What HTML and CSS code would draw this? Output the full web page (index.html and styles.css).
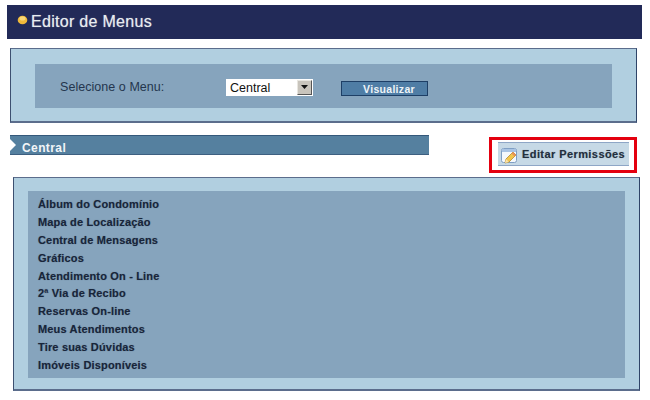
FILE: index.html
```html
<!DOCTYPE html>
<html lang="pt">
<head>
<meta charset="utf-8">
<title>Editor de Menus</title>
<link rel="stylesheet" href="styles.css">
</head>
<body>
<header class="title-bar">
  <svg class="bullet" width="11" height="10" viewBox="0 0 11 10"><ellipse cx="5.500" cy="5" rx="4.800" ry="4.300" fill="#f0b93a"/><ellipse cx="5.500" cy="3.600" rx="3" ry="2" fill="#f8d878"/></svg>
  <h1 class="title">Editor de Menus</h1>
</header>
<section class="panel panel-select">
  <div class="panel-inner select-row">
    <span class="select-label">Selecione o Menu:</span>
    <div class="fake-select">
      <span class="fake-value">Central</span>
      <span class="fake-arrow"><svg width="7" height="4" viewBox="0 0 7 4"><path d="M0 0h7L3.500 4z" fill="#111"/></svg></span>
    </div>
    <button class="view-btn" type="button">Visualizar</button>
  </div>
</section>
<div class="section-row">
  <div class="section-bar">
    <span class="section-notch"></span>
    <span class="section-name">Central</span>
  </div>
  <div class="highlight">
    <div class="perm-btn">
      <svg class="perm-icon" width="19" height="18" viewBox="0 0 19 18">
        <rect x="0.500" y="1.500" width="15" height="14" rx="2" fill="#f4f8fc" stroke="#7f9fc4"/>
        <rect x="1" y="2" width="14" height="3" fill="#a9c4e4"/>
        <path d="M4 16l1-4 7-7 3 3-7 7z" fill="#f3c64c" stroke="#b58a2c" stroke-width="0.800"/>
        <path d="M4 16l1-4 3 3z" fill="#f7e3b0"/>
        <path d="M10.500 6.500l3 3 1.500-1.500-3-3z" fill="#e8905a"/>
      </svg>
      <span class="perm-label">Editar Permissões</span>
    </div>
  </div>
</div>
<section class="panel panel-list">
  <ul class="panel-inner menu-list">
    <li>Álbum do Condomínio</li>
    <li>Mapa de Localização</li>
    <li>Central de Mensagens</li>
    <li>Gráficos</li>
    <li>Atendimento On - Line</li>
    <li>2ª Via de Recibo</li>
    <li>Reservas On-line</li>
    <li>Meus Atendimentos</li>
    <li>Tire suas Dúvidas</li>
    <li>Imóveis Disponíveis</li>
  </ul>
</section>
</body>
</html>
```
FILE: styles.css
```css
html, body {
  margin: 0;
  padding: 0;
  background: #fff;
  font-family: "Liberation Sans", Arial, sans-serif;
}
body {
  width: 650px;
  height: 400px;
  overflow: hidden;
  padding-top: 5px;
  box-sizing: border-box;
}
.title-bar {
  display: flex;
  align-items: center;
  width: 635px;
  height: 34px;
  margin-left: 7px;
  padding-left: 10px;
  box-sizing: border-box;
  background: #222a58;
}
.bullet {
  margin-top: -5px;
  margin-right: 3px;
}
.title {
  margin: -1px 0 0;
  font-size: 16px;
  font-weight: normal;
  color: #e8ecf0;
  letter-spacing: 0.3px;
  text-shadow: 0 0 1px rgba(232, 236, 240, 0.6);
}
.panel {
  box-sizing: border-box;
  background: #b1cfe0;
  border: 1px solid #2f4468;
  border-top-color: #5b6d8c;
  border-left-color: #3d5070;
  border-bottom-width: 2px;
  border-bottom-color: #5b6d8c;
}
.panel-inner {
  background: #86a4bd;
}
.panel-select {
  width: 627px;
  height: 75px;
  margin: 9px 0 0 10px;
  padding: 15px 24px 0;
}
.select-row {
  display: flex;
  align-items: center;
  height: 44px;
  padding-left: 25px;
}
.select-label {
  width: 166px;
  padding-top: 2px;
  font-size: 12.500px;
  color: #24364e;
  letter-spacing: 0.05px;
}
.fake-select {
  display: flex;
  align-items: center;
  justify-content: space-between;
  width: 87px;
  height: 17px;
  margin-top: 2px;
  padding: 0 1px 0 4px;
  box-sizing: border-box;
  background: #fff;
}
.fake-value {
  padding-top: 2px;
  font-size: 12.500px;
  color: #111;
}
.fake-arrow {
  display: flex;
  align-items: center;
  justify-content: center;
  width: 15px;
  height: 15px;
  box-sizing: border-box;
  background: #c8c4bc;
  border: 1px solid;
  border-color: #e8e6e0 #555 #555 #e8e6e0;
}
.view-btn {
  width: 87px;
  height: 15px;
  margin: 5px 0 0 28px;
  padding: 0 0 0 9px;
  box-sizing: border-box;
  background: #4f7da5;
  border: 1px solid #1e3f66;
  color: #eef4f8;
  font-family: inherit;
  font-size: 10.500px;
  font-weight: bold;
  line-height: 12px;
  letter-spacing: 0.3px;
}
.section-row {
  display: flex;
  align-items: flex-start;
  height: 54px;
  margin: 12px 0 0 10px;
}
.section-bar {
  position: relative;
  display: flex;
  align-items: center;
  width: 419px;
  height: 20px;
  padding: 5px 0 0 12px;
  box-sizing: border-box;
  background: #55809f;
  border-top: 1px solid #34587a;
  border-bottom: 1px solid #3d5f80;
}
.section-notch {
  position: absolute;
  left: 0;
  top: 3px;
  border-left: 6px solid #fff;
  border-top: 6px solid transparent;
  border-bottom: 6px solid transparent;
}
.section-name {
  font-size: 12px;
  font-weight: bold;
  color: #f2f6f8;
  letter-spacing: 0.4px;
}
.highlight {
  width: 148px;
  height: 36px;
  margin: 2px 0 0 60px;
  padding: 2px 5px 0 6px;
  box-sizing: border-box;
  border: 3px solid #e4000f;
  background: #fff;
}
.perm-btn {
  display: flex;
  align-items: center;
  width: 131px;
  height: 24px;
  padding-left: 3px;
  box-sizing: border-box;
  background: #c6d9e6;
  border-top: 1px solid #8ea6c6;
  border-bottom: 1px solid #8ea6c6;
}
.perm-icon {
  flex: none;
  margin-top: 3px;
}
.perm-label {
  margin-left: 2px;
  font-size: 11px;
  font-weight: bold;
  color: #232f3e;
  letter-spacing: 0.42px;
  white-space: nowrap;
  text-shadow: 0 0 1px rgba(35, 47, 62, 0.4);
}
.panel-list {
  width: 627px;
  height: 214px;
  margin: -12px 0 0 13px;
  padding: 13px 14px 0 14px;
}
.menu-list {
  height: 187px;
  margin: 0;
  padding: 4px 0 0 10px;
  box-sizing: border-box;
  list-style: none;
}
.menu-list li {
  height: 17.900px;
  font-size: 11px;
  font-weight: bold;
  line-height: 18px;
  color: #18253a;
  letter-spacing: 0.17px;
  text-shadow: 0 0 1px rgba(24, 37, 58, 0.4);
}
```
